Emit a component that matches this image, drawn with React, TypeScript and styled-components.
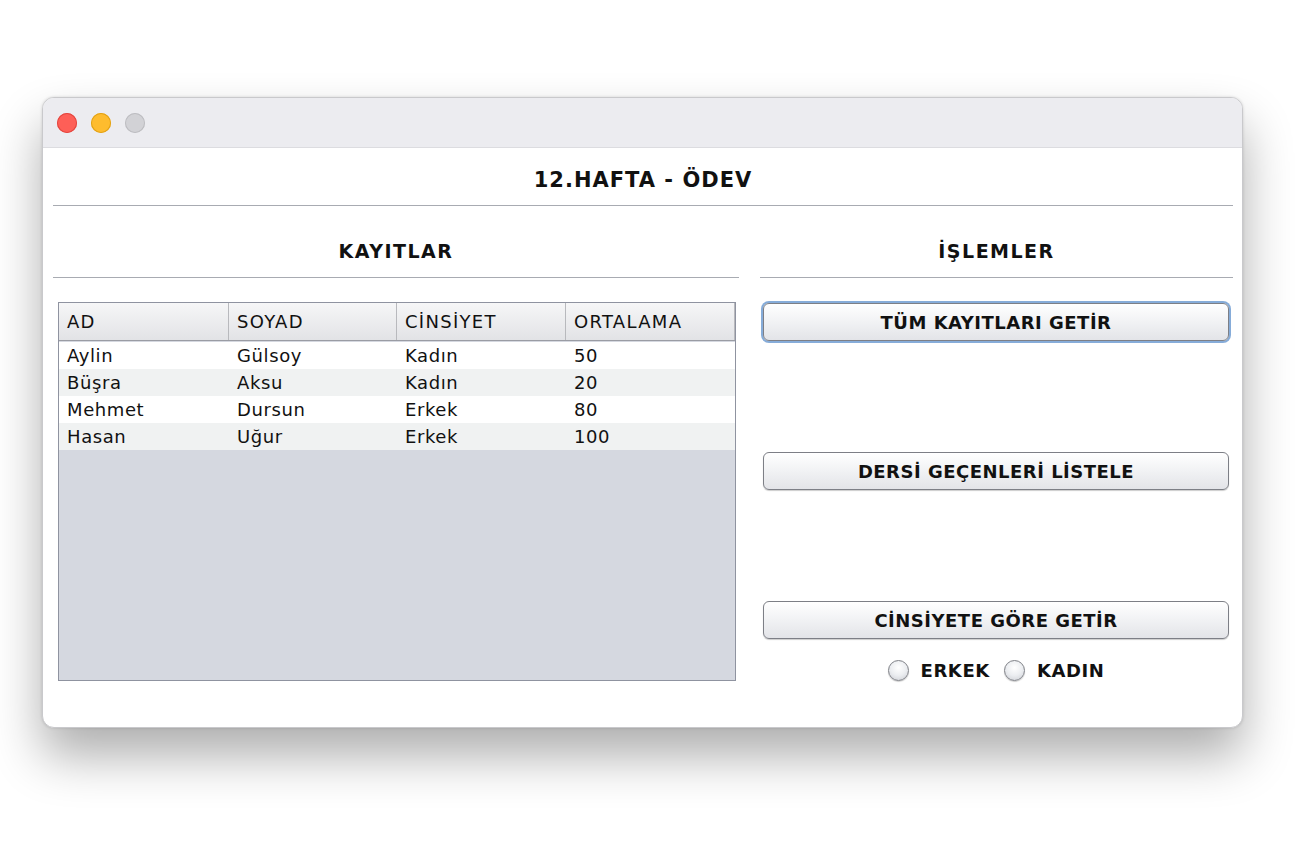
import React from "react";
import styled, { createGlobalStyle } from "styled-components";

const Global = createGlobalStyle`
  html, body { margin: 0; padding: 0; background: #ffffff; }
  body { font-family: "DejaVu Sans", "Liberation Sans", sans-serif; color: #111; }
`;

const Page = styled.div`
  width: 1300px;
  height: 850px;
  padding: 97px 0 0 42px;
  box-sizing: border-box;
`;

const Window = styled.div`
  width: 1201px;
  height: 631px;
  border-radius: 12px;
  background: #ffffff;
  border: 1px solid #c9c9cc;
  box-sizing: border-box;
  overflow: hidden;
  box-shadow: 0 28px 50px rgba(0, 0, 0, 0.32), 0 0 3px rgba(0, 0, 0, 0.15);
  display: flex;
  flex-direction: column;
`;

const TitleBar = styled.div`
  height: 49px;
  background: #ececf0;
  border-bottom: 1px solid #dcdce0;
  display: flex;
  align-items: center;
  gap: 14px;
  padding-left: 14px;
  flex-shrink: 0;
`;

const Light = styled.div<{ $c: string; $b: string }>`
  width: 20px;
  height: 20px;
  border-radius: 50%;
  background: ${(p) => p.$c};
  box-shadow: inset 0 0 0 1px ${(p) => p.$b};
`;

const Content = styled.div`
  padding: 0 9px 0 10px;
  display: flex;
  flex-direction: column;
`;

const Heading = styled.div<{ $h: number; $pad: number; $size: number; $ls: number }>`
  height: ${(p) => p.$h}px;
  display: flex;
  align-items: center;
  justify-content: center;
  font-weight: bold;
  font-size: ${(p) => p.$size}px;
  letter-spacing: ${(p) => p.$ls}px;
  border-bottom: 1px solid #a8abb2;
  box-sizing: border-box;
  padding-top: ${(p) => p.$pad}px;
`;

const Columns = styled.div`
  display: grid;
  grid-template-columns: 686px 473px;
  column-gap: 21px;
`;

const Column = styled.div`
  display: flex;
  flex-direction: column;
`;

const TableBox = styled.div`
  margin: 24px 0 0 5px;
  width: 678px;
  height: 379px;
  border: 1px solid #8f93a0;
  box-sizing: border-box;
  background: #d5d8e0;
  display: flex;
  flex-direction: column;
`;

const cols = "170px 168px 169px 169px 1fr";

const HeaderRow = styled.div`
  height: 37px;
  display: grid;
  grid-template-columns: ${cols};
  background: linear-gradient(#f6f6f7, #e2e3e6);
  border-bottom: 1px solid #9a9ca4;
  margin-bottom: 1px;
`;

const HeaderCell = styled.div`
  display: flex;
  align-items: center;
  padding-left: 8px;
  padding-bottom: 1px;
  font-size: 18px;
  letter-spacing: 1.3px;
  border-right: 1px solid #b8b9bd;
  &:last-child { border-right: none; padding-left: 0; }
`;

const Row = styled.div<{ $alt: boolean }>`
  height: 27px;
  display: grid;
  grid-template-columns: ${cols};
  background: ${(p) => (p.$alt ? "#f0f2f2" : "#ffffff")};
`;

const Cell = styled.div`
  display: flex;
  align-items: center;
  padding-left: 8px;
  font-size: 18px;
  letter-spacing: 0.6px;
`;

const ButtonArea = styled.div`
  display: grid;
  grid-template-rows: 150px 149px auto;
  padding: 24px 4px 0 3px;
`;

const Btn = styled.div<{ $focus?: boolean }>`
  height: 38px;
  box-sizing: border-box;
  border-radius: 6px;
  border: 1px solid #7d7f86;
  background: linear-gradient(#ffffff 0%, #f1f2f4 50%, #e3e4e8 100%);
  display: flex;
  align-items: center;
  justify-content: center;
  font-weight: bold;
  font-size: 18px;
  letter-spacing: 0.5px;
  box-shadow: ${(p) =>
    p.$focus ? "0 0 0 2px #86acd9, 0 1px 1px rgba(0,0,0,0.2)" : "0 1px 1px rgba(0,0,0,0.2)"};
  margin-top: ${(p) => (p.$focus ? "1px" : "0")};
`;

const BtnBlock = styled.div`
  display: flex;
  flex-direction: column;
`;

const RadioRow = styled.div`
  display: flex;
  justify-content: center;
  align-items: center;
  gap: 14px;
  margin-top: 21px;
`;

const RadioItem = styled.label`
  display: flex;
  align-items: center;
  gap: 12px;
  font-weight: bold;
  font-size: 18px;
  letter-spacing: 0.6px;
`;

const RadioCircle = styled.span`
  width: 21px;
  height: 21px;
  border-radius: 50%;
  box-sizing: border-box;
  border: 1px solid #7f8187;
  background: radial-gradient(circle at 50% 35%, #ffffff 0%, #eceef1 50%, #cbcdd3 100%);
  box-shadow: 0 1px 1px rgba(0, 0, 0, 0.2);
`;

const rows = [
  ["Aylin", "Gülsoy", "Kadın", "50"],
  ["Büşra", "Aksu", "Kadın", "20"],
  ["Mehmet", "Dursun", "Erkek", "80"],
  ["Hasan", "Uğur", "Erkek", "100"],
];

export default function App() {
  return (
    <>
      <Global />
      <Page>
        <Window>
          <TitleBar>
            <Light $c="#fe5f57" $b="#e2463f" />
            <Light $c="#febc2e" $b="#e1a116" />
            <Light $c="#d2d2d6" $b="#bdbdc1" />
          </TitleBar>
          <Content>
            <Heading $h={58} $pad={6} $size={21} $ls={1}>
              12.HAFTA - ÖDEV
            </Heading>
            <Columns>
              <Column>
                <Heading $h={72} $pad={19} $size={19} $ls={1.5}>
                  KAYITLAR
                </Heading>
                <TableBox>
                  <HeaderRow>
                    <HeaderCell>AD</HeaderCell>
                    <HeaderCell>SOYAD</HeaderCell>
                    <HeaderCell>CİNSİYET</HeaderCell>
                    <HeaderCell>ORTALAMA</HeaderCell>
                    <HeaderCell />
                  </HeaderRow>
                  {rows.map((r, i) => (
                    <Row key={i} $alt={i % 2 === 1}>
                      {r.map((c, j) => (
                        <Cell key={j}>{c}</Cell>
                      ))}
                      <Cell />
                    </Row>
                  ))}
                </TableBox>
              </Column>
              <Column>
                <Heading $h={72} $pad={19} $size={19} $ls={1.5}>
                  İŞLEMLER
                </Heading>
                <ButtonArea>
                  <BtnBlock>
                    <Btn $focus>TÜM KAYITLARI GETİR</Btn>
                  </BtnBlock>
                  <BtnBlock>
                    <Btn>DERSİ GEÇENLERİ LİSTELE</Btn>
                  </BtnBlock>
                  <BtnBlock>
                    <Btn>CİNSİYETE GÖRE GETİR</Btn>
                    <RadioRow>
                      <RadioItem>
                        <RadioCircle />
                        ERKEK
                      </RadioItem>
                      <RadioItem>
                        <RadioCircle />
                        KADIN
                      </RadioItem>
                    </RadioRow>
                  </BtnBlock>
                </ButtonArea>
              </Column>
            </Columns>
          </Content>
        </Window>
      </Page>
    </>
  );
}
